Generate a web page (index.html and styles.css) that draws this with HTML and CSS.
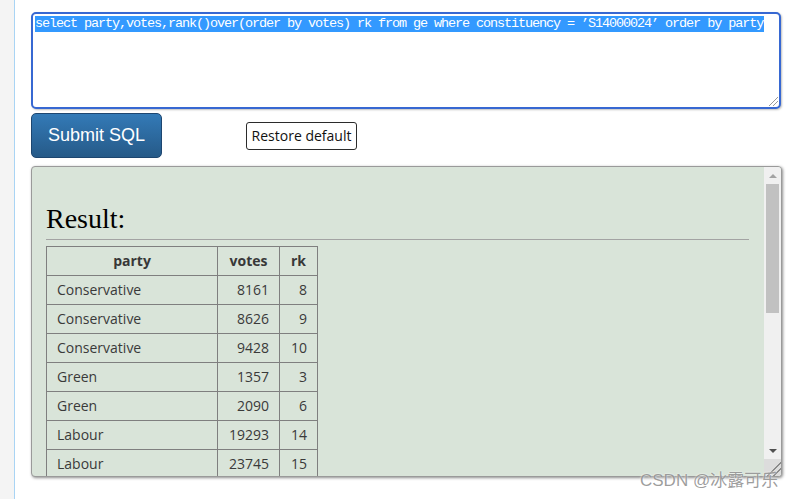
FILE: index.html
```html
<!DOCTYPE html>
<html>
<head>
<meta charset="utf-8">
<link rel="stylesheet" href="styles.css">
</head>
<body>
<div class="sidebar"></div>
<div class="main">
  <div class="sql-box">
    <span class="sel">select party,votes,rank()over(order by votes) rk from ge where constituency = ’S14000024’ order by party</span>
    <span class="grip"></span>
  </div>
  <div class="btn-row">
    <button class="submit">Submit SQL</button>
    <button class="restore">Restore default</button>
  </div>
  <div class="result">
    <div class="result-body">
      <h2 class="result-title">Result:</h2>
      <div class="rule"></div>
      <table class="grid">
        <thead>
          <tr><th class="c-party">party</th><th class="c-votes">votes</th><th class="c-rk">rk</th></tr>
        </thead>
        <tbody>
          <tr><td>Conservative</td><td class="num">8161</td><td class="num">8</td></tr>
          <tr><td>Conservative</td><td class="num">8626</td><td class="num">9</td></tr>
          <tr><td>Conservative</td><td class="num">9428</td><td class="num">10</td></tr>
          <tr><td>Green</td><td class="num">1357</td><td class="num">3</td></tr>
          <tr><td>Green</td><td class="num">2090</td><td class="num">6</td></tr>
          <tr><td>Labour</td><td class="num">19293</td><td class="num">14</td></tr>
          <tr><td>Labour</td><td class="num">23745</td><td class="num">15</td></tr>
        </tbody>
      </table>
    </div>
    <div class="vscroll">
      <div class="sb-btn"><span class="tri-up"></span></div>
      <div class="sb-track"><div class="sb-thumb"></div></div>
      <div class="sb-btn"><span class="tri-down"></span></div>
      <div class="sb-corner"></div>
    </div>
  </div>
</div>
<div class="watermark">CSDN @冰露可乐</div>
</body>
</html>
```

FILE: styles.css
```css
html, body {
  margin: 0;
  padding: 0;
  height: 100%;
  background: #fff;
  overflow: hidden;
}
body {
  display: flex;
  position: relative;
}
.sidebar {
  width: 14px;
  flex: none;
  background: #f4f4f4;
  border-right: 1px solid #a9d4f4;
}
.main {
  flex: 1;
  padding: 12px 0 0 16px;
}
.sql-box {
  position: relative;
  box-sizing: border-box;
  width: 750px;
  height: 97px;
  border: 2px solid #3768d2;
  border-radius: 5px;
  padding: 2px 2px 0;
  background: #fff;
  box-shadow: 1px 1px 2px rgba(0,0,0,0.25);
  font-family: "Liberation Mono", monospace;
  font-size: 13.5px;
  letter-spacing: -1.1px;
  line-height: 16px;
  white-space: nowrap;
  overflow: hidden;
}
.sel {
  background: #3399ff;
  color: #fff;
  display: inline-block;
  padding-right: 1px;
}
.grip {
  position: absolute;
  right: 1px;
  bottom: 1px;
  width: 9px;
  height: 9px;
  background: linear-gradient(135deg, transparent 45%, #999 45%, #999 52%, transparent 52%, transparent 70%, #999 70%, #999 77%, transparent 77%);
}
.btn-row {
  display: flex;
  align-items: center;
  margin-top: 4px;
}
.submit {
  box-sizing: border-box;
  width: 131px;
  height: 45px;
  border: 1px solid #1d4670;
  border-radius: 5px;
  background: linear-gradient(#337ab7, #265a88);
  color: #fff;
  font-family: "Liberation Sans", Arial, sans-serif;
  font-size: 18px;
  padding: 0;
}
.restore {
  box-sizing: border-box;
  margin-left: 84px;
  width: 111px;
  height: 28px;
  border: 1px solid #2b2b2b;
  border-radius: 3px;
  background: #fff;
  color: #111;
  font-family: "Open Sans", "Noto Sans", sans-serif;
  font-size: 14px;
  padding: 0;
}
.result {
  box-sizing: border-box;
  margin-top: 8px;
  width: 751px;
  height: 311px;
  border: 1px solid #9a9a9a;
  border-radius: 4px;
  background: #d9e4d9;
  box-shadow: 1px 1px 3px rgba(0,0,0,0.45);
  display: flex;
  overflow: hidden;
}
.result-body {
  flex: 1;
  padding: 0 15px 0 14px;
  overflow: hidden;
}
.result-title {
  margin: 37px 0 0;
  font-family: "Liberation Serif", "DejaVu Serif", serif;
  font-weight: normal;
  font-size: 28px;
  line-height: 30px;
  color: #000;
}
.rule {
  margin-top: 5px;
  height: 1px;
  background: #a3a3a3;
}
.grid {
  margin-top: 6px;
  border-collapse: collapse;
  font-family: "Open Sans", "Noto Sans", sans-serif;
  font-size: 14px;
  color: #3a3a3a;
}
.grid th, .grid td {
  border: 1px solid #7f7f7f;
  height: 29px;
  box-sizing: border-box;
  padding: 0 10px;
  line-height: 20px;
}
.grid th {
  font-weight: bold;
  text-align: center;
  color: #383838;
}
.c-party { width: 171px; }
.c-votes { width: 62px; }
.c-rk { width: 38px; }
.grid td.num {
  text-align: right;
}
.grid th.c-votes, .grid th.c-rk { padding: 0 6px; }
.vscroll {
  width: 17px;
  flex: none;
  display: flex;
  flex-direction: column;
  background: #f0f0f0;
}
.sb-btn {
  height: 17px;
  display: flex;
  align-items: center;
  justify-content: center;
}
.tri-up {
  width: 0;
  height: 0;
  border-left: 4px solid transparent;
  border-right: 4px solid transparent;
  border-bottom: 4px solid #a3a3a3;
}
.tri-down {
  width: 0;
  height: 0;
  border-left: 4px solid transparent;
  border-right: 4px solid transparent;
  border-top: 4px solid #505050;
}
.sb-track {
  flex: 1;
  padding: 0 2px;
}
.sb-thumb {
  height: 129px;
  background: #c1c1c1;
}
.sb-corner {
  height: 17px;
  background: #dcdcdc linear-gradient(135deg, transparent 58%, #8a8a8a 58%, #8a8a8a 63%, transparent 63%, transparent 76%, #8a8a8a 76%, #8a8a8a 81%, transparent 81%);
}
.watermark {
  position: absolute;
  left: 640px;
  top: 471px;
  font-family: "Liberation Sans", "Noto Sans CJK SC", sans-serif;
  font-size: 17px;
  line-height: 20px;
  color: rgba(140,140,140,0.85);
  text-shadow: 0 0 2px #fff;
  white-space: nowrap;
}
```
